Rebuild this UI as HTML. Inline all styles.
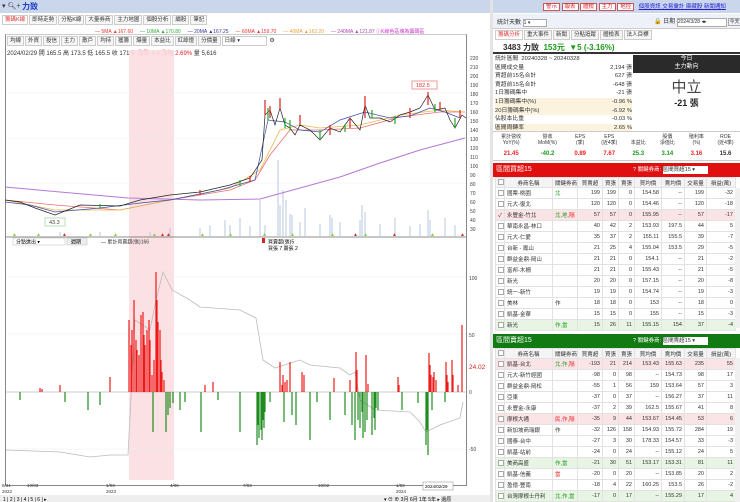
<!DOCTYPE html>
<html><head><meta charset="utf-8"><style>
*{margin:0;padding:0;box-sizing:border-box}
body{width:740px;height:502px;overflow:hidden;background:#fff;font-family:"Liberation Sans","Noto Sans CJK TC",sans-serif;font-size:6px;color:#333;position:relative}
.abs{position:absolute}
.tab{display:inline-block;border:1px solid #ccc;padding:0 2px;height:10px;line-height:9px;background:#f6f6f6;margin-right:1px;font-size:5.5px}
table{border-collapse:collapse;table-layout:fixed;position:absolute;font-size:5.5px}
td{border:1px solid #e2e2e2;height:11px;padding:0 2px;text-align:right;white-space:nowrap;overflow:hidden}
td.l{text-align:left}
tr.h td{text-align:center;background:#f4f4f4;height:10px}
.pk td{background:#fbe4e6}.gn td{background:#e8f5e4}
.cb{display:inline-block;width:6px;height:6px;border:1px solid #aaa;background:#fff;vertical-align:middle}
.g{color:#1a9a1a}.r{color:#e22}
</style></head><body>
<div class="abs" style="left:0;top:0;width:490px;height:13px;background:#c9d6ec"></div>
<div class="abs" style="left:2px;top:2px;font-size:7px">▾ 🔍︎+</div>
<div class="abs" style="left:22px;top:1px;font-size:8px;color:#1d3fc4;font-weight:bold">力致</div>
<div class="abs" style="left:2px;top:15px">
<span class="tab" style="color:#d33;background:#fff">籌碼K線</span><span class="tab">即時走勢</span><span class="tab">分點K線</span><span class="tab">大量券商</span><span class="tab">主力地圖</span><span class="tab">個股分析</span><span class="tab">續股</span><span class="tab">筆記</span></div>
<div class="abs" style="left:95px;top:28px;font-size:5px;white-space:nowrap">
<span style="color:#e33">— 5MA ▲167.60</span>&nbsp;&nbsp;&nbsp;&nbsp; <span style="color:#3a3">— 10MA ▲170.80</span>&nbsp;&nbsp;&nbsp;&nbsp; <span style="color:#339">— 20MA ▲167.25</span>&nbsp;&nbsp;&nbsp;&nbsp; <span style="color:#e33">— 60MA ▲159.70</span>&nbsp;&nbsp;&nbsp;&nbsp; <span style="color:#e9a33c">— 40MA ▲162.20</span>&nbsp;&nbsp;&nbsp;&nbsp; <span style="color:#a4a">— 240MA ▲121.87</span> <span style="color:#c3c">ⓘK線色區塊為籌碼區</span></div>
<div class="abs" style="left:5px;top:34px;width:462px;height:452px;border:1px solid #888;border-top:1px solid #ccc"></div>
<div class="abs" style="left:7px;top:36px">
<span class="tab">均線</span><span class="tab">外資</span><span class="tab">投信</span><span class="tab">主力</span><span class="tab">散戶</span><span class="tab">均持</span><span class="tab">獲籌</span><span class="tab">爆量</span><span class="tab">本益比</span><span class="tab">紅綠燈</span><span class="tab">分價量</span><span class="tab" style="width:45px;background:#fff">日線 ▾</span> ⚙</div>
<div class="abs" style="left:7px;top:48px;font-size:6px;white-space:nowrap">2024/02/29 開 165.5 高 173.5 低 165.5 收 171.5 &nbsp;<span class="r">漲跌 4.5 漲幅 2.69%</span> 量 5,616</div>
<svg class="abs" style="left:0;top:0" width="490" height="502">
<rect x="129" y="50" width="45" height="430" fill="#fbdde1" opacity=".9"/>
<g stroke="#eee" stroke-width=".5">
<line x1="6" y1="93" x2="466" y2="93"/><line x1="6" y1="138" x2="466" y2="138"/><line x1="6" y1="183" x2="466" y2="183"/>
<line x1="6" y1="277" x2="466" y2="277"/><line x1="6" y1="334" x2="466" y2="334"/><line x1="6" y1="449" x2="466" y2="449"/></g>
<g font-size="5" fill="#444">
<text x="470" y="60">220</text><text x="470" y="69">210</text><text x="470" y="78">200</text><text x="470" y="87">190</text><text x="470" y="96">180</text><text x="470" y="105">170</text><text x="470" y="114">160</text><text x="470" y="123">150</text><text x="470" y="132">140</text><text x="470" y="141">130</text><text x="470" y="150">120</text><text x="470" y="159">110</text><text x="470" y="168">100</text><text x="470" y="177">90</text><text x="470" y="186">80</text><text x="470" y="195">70</text><text x="470" y="204">60</text><text x="470" y="213">50</text><text x="470" y="222">40</text><text x="470" y="231">30</text>
<text x="469" y="280">100</text><text x="469" y="337">50</text><text x="469" y="394">0</text><text x="469" y="451">-50</text>
</g>
<text x="469" y="369" font-size="6.5" fill="#c22">24.02</text>
<g stroke="#b7c8dc" stroke-width="1">
<path d="M200 236V228M210 236V225M225 236V220M230 236V225M240 236V218M260 236V200M265 236V225M278 236V160M280 236V205M283 236V190M286 236V200M292 236V215M305 236V208M330 236V215M332 236V218M362 236V205M365 236V212M395 236V218M428 236V210M430 236V220M445 236V218M455 236V225M170 236V228M150 236V232M100 236V232M60 236V232M230 236V226M320 236V224M340 236V222M380 236V224M410 236V226M420 236V224M250 236V226M290 236V214M300 236V222M360 236V220"/></g>
<polyline fill="none" stroke="#b37ad6" stroke-width="1" points="5,187 60,192 128,198 200,200 260,199 300,188 340,177 380,163 420,150 465,138"/>
<polyline fill="none" stroke="#e87070" stroke-width=".8" points="5,200 55,205 120,210 170,200 230,190 255,180 270,155 290,130 320,130 360,128 400,117 440,112 465,112"/>
<polyline fill="none" stroke="#e9b84a" stroke-width=".8" points="5,200 55,210 120,210 170,200 230,188 260,170 280,130 300,125 320,128 360,125 400,115 440,110 465,112"/>
<polyline fill="none" stroke="#3c4fa8" stroke-width=".7" points="5,202 30,205 55,212 100,208 140,203 170,200 220,190 255,180 268,120 285,122 300,130 320,132 340,120 365,112 390,118 410,116 430,108 445,112 460,118"/>
<polyline fill="none" stroke="#222" stroke-width=".7" points="5,200 20,202 35,208 55,215 80,205 120,206 140,200 170,195 200,192 230,185 250,178 262,160 265,115 270,110 275,125 280,108 285,125 290,128 295,135 300,125 310,130 320,140 330,128 340,132 350,118 360,130 365,105 370,118 380,118 390,122 400,115 410,112 420,108 428,95 435,110 445,108 450,120 455,128 462,115 466,118"/>
<g stroke="#d22" stroke-width="1.2"><path d="M265 115V100M280 110V98M300 125V115M330 135V125M365 118V96M410 118V108M428 105V92M440 110V102M460 118V110M250 182V176M200 195V190M270 118V106M350 128V118"/></g>
<g stroke="#2a2" stroke-width="1.2"><path d="M268 120V108M285 128V118M320 140V130M345 132V124M372 118V110M395 124V116M435 112V104M455 128V118M240 186V180M100 208V204M290 130V120"/></g>
<rect x="412" y="81" width="25" height="8" fill="#fff" stroke="#e99"/><text x="416" y="87" font-size="5.5" fill="#d33">182.5</text>
<rect x="45" y="218" width="20" height="8" fill="#fff" stroke="#bdb"/><text x="49" y="224" font-size="5.5" fill="#444">43.3</text>
<g fill="#8c4" font-size="5"><text x="12" y="236">▲</text><text x="36" y="236">▲</text><text x="88" y="236">▲</text><text x="113" y="236">▲</text><text x="152" y="236">▲</text><text x="200" y="236">▲</text><text x="228" y="236">▲</text><text x="262" y="236">▲</text><text x="290" y="236">▲</text><text x="330" y="236">▲</text><text x="363" y="236">▲</text><text x="430" y="236">▲</text></g>
<g fill="#c33" font-size="5"><text x="62" y="236">▲</text><text x="160" y="236">▲</text><text x="166" y="236">▲</text><text x="353" y="236">▲</text><text x="392" y="236">▲</text><text x="460" y="236">▲</text></g>
<line x1="6" y1="237" x2="466" y2="237" stroke="#666" stroke-width=".7"/>
<line x1="6" y1="392" x2="466" y2="392" stroke="#999" stroke-width=".5"/>
<polyline fill="none" stroke="#bbb" stroke-width=".8" points="6,450 60,452 90,457 110,455 128,455 135,320 150,330 156,300 163,272 172,290 190,300 200,307 240,310 256,318 263,360 275,368 300,360 310,365 340,368 350,375 355,372 360,400 375,410 410,412 420,422 426,432 440,425 460,418 463,402"/>
<g stroke="#ee1a1a" stroke-width="1.2"><path d="M129 392V320M131 392V345M134 392V300M136 392V340M139 392V355M141 392V315M143 392V312M145 392V345M147 392V330M149 392V320M152 392V375M154 392V360M156 392V272M158 392V322M160 392V330M162 392V372M164 392V380M110 392V377M60 392V385M205 392V385M213 392V382M280 392V362M282 392V385M285 392V382M290 392V362M302 392V372M304 392V375M334 392V378M350 392V380M356 392V352M366 392V355M368 392V384M398 392V377M429 392V353M431 392V375M433 392V377M436 392V380M446 392V362M448 392V382M452 392V360M458 392V385M462 392V325M40 392V388M42 392V389M132 392V330M137 392V350M144 392V335M150 392V340M157 392V300M161 392V360M283 392V375M287 392V380M357 392V370M399 392V385M430 392V365M434 392V372M447 392V375M453 392V375"/></g>
<g stroke="#1e8c1e" stroke-width="1.2"><path d="M20 392V400M65 392V402M88 392V410M100 392V405M153 392V432M166 392V432M168 392V415M170 392V408M173 392V403M180 392V410M185 392V402M201 392V432M218 392V400M240 392V432M257 392V445M259 392V438M261 392V430M263 392V420M265 392V412M270 392V402M284 392V422M292 392V415M296 392V425M310 392V440M317 392V402M330 392V420M345 392V415M352 392V425M355 392V440M363 392V438M365 392V432M367 392V420M372 392V435M375 392V430M378 392V410M402 392V410M418 392V403M426 392V445M428 392V455M432 392V410M445 392V402M374 392V418M360 392V428M258 392V425M262 392V440M264 392V428M358 392V420M362 392V412M376 392V408M427 392V430"/></g>
<rect x="13" y="238" width="52" height="7" fill="#fff" stroke="#bbb" stroke-width=".5"/><text x="16" y="243.5" font-size="5">分點進出 ▾</text>
<rect x="67" y="238" width="20" height="7" fill="#eee" stroke="#bbb" stroke-width=".5"/><text x="71" y="243.5" font-size="5">週期</text>
<text x="101" y="243.5" font-size="5" fill="#333">— 累計買賣超(張)166</text>
<rect x="262" y="238" width="3" height="5" fill="#d22"/><text x="268" y="243.5" font-size="5">買賣超(張)5</text><text x="268" y="250" font-size="5">買張 7 賣張 2</text>
<g font-size="4.5" fill="#333"><text x="2" y="487">8/31</text><text x="2" y="493">2022</text><text x="27" y="487">10/03</text><text x="106" y="487">1/03</text><text x="106" y="493">2023</text><text x="170" y="487">4/06</text><text x="243" y="487">7/03</text><text x="318" y="487">10/02</text><text x="396" y="487">1/02</text><text x="396" y="493">2024</text></g>
<rect x="423" y="482" width="30" height="8" fill="#fff" stroke="#888" stroke-width=".5"/><text x="425" y="488" font-size="4.5">2024/02/29</text>
<rect x="0" y="495" width="490" height="7" fill="#eee"/>
<text x="3" y="501" font-size="5">1 | 2 | 3 | 4 | 5 | 6 | ▸</text>
<text x="384" y="501" font-size="5">▾ ⊖ ⊕ 3月 6月 1年 5年 ▸ 還原</text>
</svg>
<div class="abs" style="left:490px;top:0;width:3px;height:502px;background:#e3e3e3"></div>
<div class="abs" style="left:493px;top:0;width:247px;height:13px;background:#c9d6ec"></div>
<div class="abs" style="left:543px;top:2px;font-size:5.5px;white-space:nowrap"><span style="border:1px solid #c55;background:#fff;color:#d22;padding:0 2px">警示</span> <span style="border:1px solid #c55;background:#fff;color:#d22;padding:0 2px">報表</span> <span style="border:1px solid #c55;background:#fff;color:#d22;padding:0 2px">體檢</span> <span style="border:1px solid #c55;background:#fff;color:#d22;padding:0 2px">主力</span> <span style="border:1px solid #c55;background:#fff;color:#d22;padding:0 2px">地控</span> &nbsp; <u style="color:#22c">個股資訊 交易彙計 庫藏股 新聞通知</u></div>
<div class="abs" style="left:493px;top:14px;width:247px;height:15px;background:#eef2f8;border-bottom:1px solid #ccc"></div>
<div class="abs" style="left:497px;top:17px;font-size:6px">統計天數 <span style="display:inline-block;width:24px;height:8px;border:1px solid #aaa;background:#fff;font-size:5px">1 ▾</span></div>
<div class="abs" style="left:654px;top:16px;font-size:6px;white-space:nowrap">🔒 日期 <span style="display:inline-block;width:50px;height:9px;border:1px solid #aaa;background:#fff;font-size:5px">2024/3/28 ◂▸</span> <span style="border:1px solid #aaa;font-size:5px">今天</span></div>
<div class="abs" style="left:495px;top:30px"><span class="tab" style="color:#d33;background:#fff">籌碼分析</span><span class="tab">重大事件</span><span class="tab">新聞</span><span class="tab">分點追蹤</span><span class="tab">體檢表</span><span class="tab">法人目標</span></div>
<div class="abs" style="left:493px;top:41px;width:247px;height:13px;border-bottom:2px solid #333"></div>
<div class="abs" style="left:503px;top:42px;font-size:8px;font-weight:bold;white-space:nowrap">3483 力致 &nbsp;<span class="g">153元 &nbsp;▼5 (-3.16%)</span></div>
<div class="abs" style="left:495px;top:55px;width:137px;font-size:5.8px;line-height:8.6px">
<div>統計區間 &nbsp;20240328 ~ 20240328</div>
<div>區間成交量<span style="float:right">2,194 張</span></div>
<div>買超前15名合計<span style="float:right">627 張</span></div>
<div>賣超前15名合計<span style="float:right">-648 張</span></div>
<div>1日籌碼集中<span style="float:right">-21 張</span></div>
<div style="background:#fbf3de">1日籌碼集中(%)<span style="float:right">-0.96 %</span></div>
<div style="background:#fbf3de">20日籌碼集中(%)<span style="float:right">-6.92 %</span></div>
<div>佔股本比重<span style="float:right">-0.03 %</span></div>
<div style="background:#fbf3de">區間周轉率<span style="float:right">2.65 %</span></div></div>
<div class="abs" style="left:633px;top:55px;width:107px;height:18px;background:#2a2a2a;color:#fff;text-align:center;font-size:6px;line-height:8px">今日<br>主力動向</div>
<div class="abs" style="left:633px;top:76px;width:107px;text-align:center;font-size:15px;color:#444">中立</div>
<div class="abs" style="left:633px;top:96px;width:107px;text-align:center;font-size:9px;font-weight:bold;color:#222">-21 張</div>
<div class="abs" style="left:493px;top:131px;width:247px;height:30px;border-top:1px solid #ccc;border-bottom:1px solid #ccc"></div>
<div class="abs" style="left:493px;top:134px;width:247px;display:flex;font-size:5px;text-align:center;line-height:6px">
<div style="flex:1">累計營收<br>YoY(%)</div><div style="flex:1">營收<br>MoM(%)</div><div style="flex:.8">EPS<br>(季)</div><div style="flex:.8">EPS<br>(近4季)</div><div style="flex:.8"><br>本益比</div><div style="flex:.8">股價<br>淨值比</div><div style="flex:.8">殖利率<br>(%)</div><div style="flex:.8">ROE<br>(近4季)</div></div>
<div class="abs" style="left:493px;top:151px;width:247px;display:flex;font-size:6px;text-align:center;font-weight:bold">
<div style="flex:1" class="r">21.45</div><div style="flex:1" class="g">-40.2</div><div style="flex:.8" class="r">0.89</div><div style="flex:.8" class="r">7.67</div><div style="flex:.8" class="g">25.3</div><div style="flex:.8" class="g">3.14</div><div style="flex:.8" class="r">3.16</div><div style="flex:.8">15.6</div></div>
<div class="abs" style="left:493px;top:163px;width:247px;height:14px;background:#e01010;color:#fff;font-size:7px;line-height:14px;padding-left:3px">區間買超15<span style="position:absolute;left:140px;font-size:5.5px">? 關鍵券商: <span style="background:#fff;color:#333;display:inline-block;width:45px;height:8px;line-height:8px">區間買超15 ▾</span></span></div>
<table style="left:495px;top:177px;width:240px">
<colgroup><col style="width:9px"><col style="width:48px"><col style="width:25px"><col style="width:25px"><col style="width:16px"><col style="width:16px"><col style="width:27px"><col style="width:23px"><col style="width:22px"><col style="width:29px"></colgroup>
<tr class="h"><td><i class="cb"></i></td><td>券商名稱</td><td>關鍵券商</td><td>買賣超</td><td>買張</td><td>賣張</td><td>買均價</td><td>賣均價</td><td>交易量</td><td>損益(萬)</td></tr>
<tr><td><i class="cb"></i></td><td class="l">國票-桃園</td><td class="l g">北</td><td>199</td><td>199</td><td>0</td><td>154.58</td><td>--</td><td>199</td><td>-32</td></tr>
<tr><td><i class="cb"></i></td><td class="l">元大-復北</td><td></td><td>120</td><td>120</td><td>0</td><td>154.46</td><td>--</td><td>120</td><td>-18</td></tr>
<tr class="pk"><td>✓</td><td class="l">永豐金-竹北</td><td class="l"><span class="g">北,地,</span><span class="r">隔</span></td><td>57</td><td>57</td><td>0</td><td>155.95</td><td>--</td><td>57</td><td>-17</td></tr>
<tr><td><i class="cb"></i></td><td class="l">華南永昌-林口</td><td></td><td>40</td><td>42</td><td>2</td><td>153.93</td><td>197.5</td><td>44</td><td>5</td></tr>
<tr><td><i class="cb"></i></td><td class="l">元大-仁愛</td><td></td><td>35</td><td>37</td><td>2</td><td>155.11</td><td>155.5</td><td>39</td><td>-7</td></tr>
<tr><td><i class="cb"></i></td><td class="l">台新 - 鳳山</td><td></td><td>21</td><td>25</td><td>4</td><td>155.04</td><td>153.5</td><td>29</td><td>-5</td></tr>
<tr><td><i class="cb"></i></td><td class="l">群益金鼎-岡山</td><td></td><td>21</td><td>21</td><td>0</td><td>154.1</td><td>--</td><td>21</td><td>-2</td></tr>
<tr><td><i class="cb"></i></td><td class="l">富邦-木柵</td><td></td><td>21</td><td>21</td><td>0</td><td>155.43</td><td>--</td><td>21</td><td>-5</td></tr>
<tr><td><i class="cb"></i></td><td class="l">新光</td><td></td><td>20</td><td>20</td><td>0</td><td>157.15</td><td>--</td><td>20</td><td>-8</td></tr>
<tr><td><i class="cb"></i></td><td class="l">統一-新竹</td><td></td><td>19</td><td>19</td><td>0</td><td>154.74</td><td>--</td><td>19</td><td>-3</td></tr>
<tr><td><i class="cb"></i></td><td class="l">美林</td><td class="l">作</td><td>18</td><td>18</td><td>0</td><td>153</td><td>--</td><td>18</td><td>0</td></tr>
<tr><td><i class="cb"></i></td><td class="l">凱基-金華</td><td></td><td>15</td><td>15</td><td>0</td><td>155</td><td>--</td><td>15</td><td>-3</td></tr>
<tr class="gn"><td><i class="cb"></i></td><td class="l">新光</td><td class="l g">作,當</td><td>15</td><td>26</td><td>11</td><td>155.15</td><td>154</td><td>37</td><td>-4</td></tr>
</table>
<div class="abs" style="left:493px;top:334px;width:247px;height:14px;background:#127a12;color:#fff;font-size:7px;line-height:14px;padding-left:3px">區間賣超15<span style="position:absolute;left:140px;font-size:5.5px">? 關鍵券商: <span style="background:#fff;color:#333;display:inline-block;width:45px;height:8px;line-height:8px">區間賣超15 ▾</span></span></div>
<table style="left:495px;top:348px;width:240px">
<colgroup><col style="width:9px"><col style="width:48px"><col style="width:25px"><col style="width:25px"><col style="width:16px"><col style="width:16px"><col style="width:27px"><col style="width:23px"><col style="width:22px"><col style="width:29px"></colgroup>
<tr class="h"><td><i class="cb"></i></td><td>券商名稱</td><td>關鍵券商</td><td>買賣超</td><td>買張</td><td>賣張</td><td>買均價</td><td>賣均價</td><td>交易量</td><td>損益(萬)</td></tr>
<tr class="pk"><td><i class="cb"></i></td><td class="l">凱基-台北</td><td class="l"><span class="g">北,作,</span><span class="r">隔</span></td><td>-193</td><td>21</td><td>214</td><td>153.43</td><td>155.63</td><td>235</td><td>55</td></tr>
<tr><td><i class="cb"></i></td><td class="l">元大-新竹經國</td><td></td><td>-98</td><td>0</td><td>98</td><td>--</td><td>154.73</td><td>98</td><td>17</td></tr>
<tr><td><i class="cb"></i></td><td class="l">群益金鼎-岡松</td><td></td><td>-55</td><td>1</td><td>56</td><td>159</td><td>153.64</td><td>57</td><td>3</td></tr>
<tr><td><i class="cb"></i></td><td class="l">亞東</td><td></td><td>-37</td><td>0</td><td>37</td><td>--</td><td>156.27</td><td>37</td><td>11</td></tr>
<tr><td><i class="cb"></i></td><td class="l">永豐金-永康</td><td></td><td>-37</td><td>2</td><td>39</td><td>162.5</td><td>155.67</td><td>41</td><td>8</td></tr>
<tr class="pk"><td><i class="cb"></i></td><td class="l">摩根大通</td><td class="l r">民,作,隔</td><td>-35</td><td>9</td><td>44</td><td>153.67</td><td>154.45</td><td>53</td><td>6</td></tr>
<tr><td><i class="cb"></i></td><td class="l">新加坡商瑞銀</td><td class="l">作</td><td>-32</td><td>126</td><td>158</td><td>154.93</td><td>155.72</td><td>284</td><td>19</td></tr>
<tr><td><i class="cb"></i></td><td class="l">國泰-台中</td><td></td><td>-27</td><td>3</td><td>30</td><td>178.33</td><td>154.57</td><td>33</td><td>-3</td></tr>
<tr><td><i class="cb"></i></td><td class="l">凱基-站前</td><td></td><td>-24</td><td>0</td><td>24</td><td>--</td><td>155.12</td><td>24</td><td>5</td></tr>
<tr class="gn"><td><i class="cb"></i></td><td class="l">美商高盛</td><td class="l g">作,當</td><td>-21</td><td>30</td><td>51</td><td>153.17</td><td>153.31</td><td>81</td><td>11</td></tr>
<tr><td><i class="cb"></i></td><td class="l">凱基-信義</td><td class="l r">當</td><td>-20</td><td>0</td><td>20</td><td>--</td><td>153.85</td><td>20</td><td>2</td></tr>
<tr><td><i class="cb"></i></td><td class="l">盈億-豐南</td><td></td><td>-18</td><td>4</td><td>22</td><td>160.25</td><td>153.5</td><td>26</td><td>-2</td></tr>
<tr class="gn"><td><i class="cb"></i></td><td class="l">台灣摩根士丹利</td><td class="l g">北,作,當</td><td>-17</td><td>0</td><td>17</td><td>--</td><td>155.29</td><td>17</td><td>4</td></tr>
</table>
<div class="abs" style="left:735px;top:188px;width:5px;height:140px;background:#f0f0f0"></div>
<div class="abs" style="left:735px;top:358px;width:5px;height:144px;background:#f0f0f0"></div>
</body></html>
